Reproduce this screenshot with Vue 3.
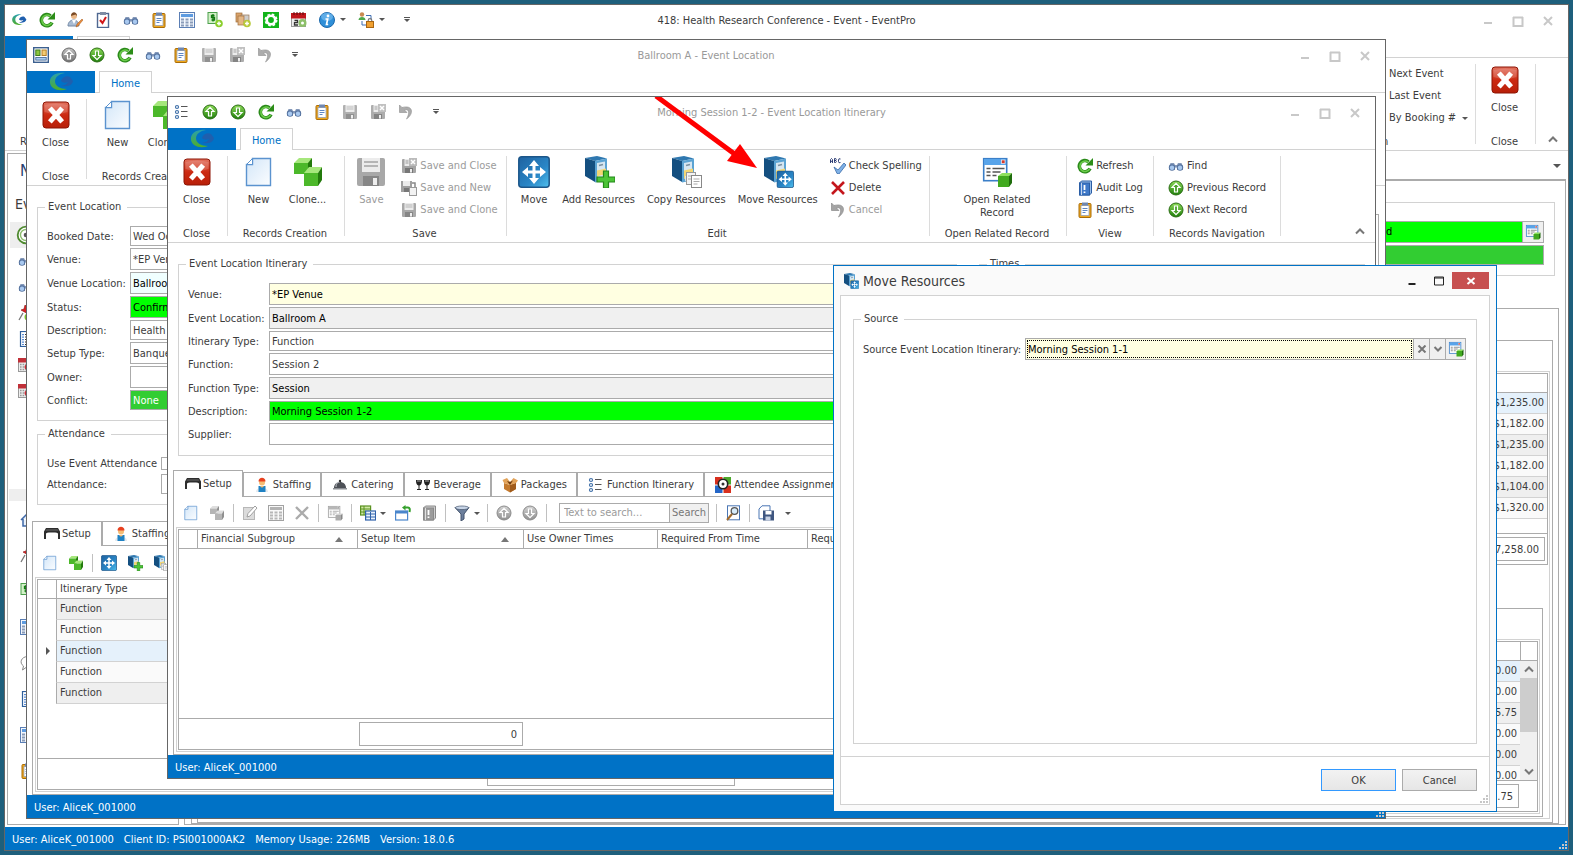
<template>
  <div class="desktop">
    <svg class="sprite" aria-hidden="true">
      <defs>
        <linearGradient id="g-green" x1="0" y1="0" x2="0" y2="1"><stop offset="0" stop-color="#8fdc5a" /><stop offset="1" stop-color="#1c7d08" /></linearGradient>
        <linearGradient id="g-blue" x1="0" y1="0" x2="1" y2="1"><stop offset="0" stop-color="#1f62a0" /><stop offset="0.6" stop-color="#2a86c6" /><stop offset="1" stop-color="#4fc0ee" /></linearGradient>
        <linearGradient id="g-red" x1="0" y1="0" x2="0" y2="1"><stop offset="0" stop-color="#e2725f" /><stop offset="0.5" stop-color="#cc2a12" /><stop offset="1" stop-color="#b81f08" /></linearGradient>
        <linearGradient id="g-page" x1="0" y1="0" x2="1" y2="1"><stop offset="0" stop-color="#d3e6f8" /><stop offset="1" stop-color="#fbfdff" /></linearGradient>
        <linearGradient id="g-logo" x1="0" y1="0" x2="0" y2="1"><stop offset="0" stop-color="#2a9fae" /><stop offset="1" stop-color="#4fae2a" /></linearGradient>
      </defs>
      <symbol id="i-logo" viewBox="0 0 26 20">
        <path d="M17 1C8 0 1 4 2 11c1 6 9 9 17 6-7 0-12-3-12-7.500C7 5 11 2 17 1z" fill="url(#g-logo)" />
        <path d="M13 9c1-4 6-6 9-4l3 4c-1 5-7 6-12 5 4-1 6-2 7-4-3 1-5 1-7-1z" fill="#1f5fae" />
      </symbol>
      <symbol id="i-refresh" viewBox="0 0 16 16">
        <path d="M13 10.500A5.600 5.600 0 1 1 11.500 3.800" fill="none" stroke="#2a8a1a" stroke-width="3.600" />
        <path d="M12.600 10.800A5.200 5.200 0 1 1 11 4" fill="none" stroke="#6bcb4a" stroke-width="1.600" />
        <path d="M8.500 7.500H16V0z" fill="#2c8d18" />
      </symbol>
      <symbol id="i-user" viewBox="0 0 16 16">
        <circle cx="7" cy="4" r="3" fill="#e9b787" /><path d="M4 4c0-5 6-5 6 0L8.500 2.500z" fill="#7a4a24" />
        <path d="M1 14c0-8 11-8 11 0z" fill="#a9bcd3" stroke="#7288a5" /><path d="M5 8l2 4 2-4z" fill="#fff" />
        <path d="M9 15l1-3 5-5 1 1-5 6z" fill="#e88b3a" stroke="#a3571c" stroke-width=".5" />
      </symbol>
      <symbol id="i-clipcheck" viewBox="0 0 16 16">
        <rect x="2.500" y="1.500" width="11" height="14" fill="#fff" stroke="#4f6891" stroke-width="1.400" /><rect x="5" y="0" width="6" height="3" fill="#7d8ba3" />
        <path d="M5 8l2.500 3L11 5" fill="none" stroke="#d01818" stroke-width="2" />
      </symbol>
      <symbol id="i-find" viewBox="0 0 16 16">
        <path d="M2.500 5h3.500l1 2h2l1-2h3.500L15 9v3H9V9.500H7V12H1V9z" fill="#8599ba" />
        <circle cx="4" cy="9.500" r="3.200" fill="#56739f" /><circle cx="12" cy="9.500" r="3.200" fill="#56739f" />
        <circle cx="4" cy="9.700" r="2.200" fill="#a9c9f0" /><circle cx="12" cy="9.700" r="2.200" fill="#a9c9f0" />
      </symbol>
      <symbol id="i-reports" viewBox="0 0 16 16">
        <rect x="2" y="1.500" width="12" height="14" rx="1" fill="#f0a81c" stroke="#a96c08" /><rect x="4" y="3.500" width="8" height="10" fill="#fff" stroke="#8a99b5" stroke-width=".7" />
        <rect x="5" y=".5" width="6" height="3" fill="#6f87b1" /><path d="M5.500 6.500h5M5.500 8.500h5M5.500 10.500h3" stroke="#5d86c4" />
      </symbol>
      <symbol id="i-doclist" viewBox="0 0 16 16">
        <rect x="2.500" y=".5" width="12" height="15" fill="#fff" stroke="#2f5f9c" stroke-width="1.200" /><path d="M7 3.500h6M7 6h6M7 8.500h6M7 11h6M7 13.500h6" stroke="#333" /><path d="M5 3v11" stroke="#2468c8" stroke-width="1.500" stroke-dasharray="1.200 1.300" />
      </symbol>
      <symbol id="i-calc" viewBox="0 0 16 16">
        <rect x=".5" y=".5" width="15" height="15" fill="#f3f7fd" stroke="#5b7fb5" /><rect x="2" y="2" width="12" height="3" fill="#5d9be0" />
        <path d="M2 7.500h3M6.500 7.500h3M11 7.500h3M2 10.500h3M6.500 10.500h3M11 10.500h3M2 13.500h3M6.500 13.500h3M11 13.500h3" stroke="#8a9bb8" stroke-width="1.800" />
      </symbol>
      <symbol id="i-dollar" viewBox="0 0 16 16">
        <rect x="1" y=".5" width="9" height="11" fill="#d3f0c8" stroke="#4ca04c" /><path d="M7.500 3.500H4.500v2h3v2.500h-3M6 2v7.500" fill="none" stroke="#117a11" stroke-width="1.300" />
        <circle cx="12" cy="11.500" r="3.800" fill="#8ccf2e" /><path d="M12 9.500v4M10 11.500h4" stroke="#fff" stroke-width="1.500" />
      </symbol>
      <symbol id="i-packs" viewBox="0 0 16 16">
        <rect x="1" y="1" width="6" height="9" fill="#d9a36c" stroke="#a06e3a" stroke-width=".7" /><rect x="6" y="3" width="8" height="9" fill="#ccc" stroke="#9a7650" stroke-width=".7" />
        <rect x="3" y="4" width="6" height="9" fill="#e3b685" stroke="#a06e3a" stroke-width=".7" /><circle cx="12" cy="11.500" r="3.800" fill="#b8ca3c" /><path d="M12 9.500v4M10 11.500h4" stroke="#fff" stroke-width="1.500" />
      </symbol>
      <symbol id="i-gear" viewBox="0 0 16 16">
        <rect width="16" height="16" fill="#12b41a" /><circle cx="8" cy="8" r="4.200" fill="none" stroke="#fff" stroke-width="2.600" /><circle cx="8" cy="8" r="5.700" fill="none" stroke="#fff" stroke-width="1.600" stroke-dasharray="2.500 2" />
      </symbol>
      <symbol id="i-calendar" viewBox="0 0 16 16">
        <rect x=".5" y="2.500" width="14" height="12" fill="#eee" stroke="#999" /><rect y="1" width="15" height="5.500" fill="#c0161c" />
        <path d="M3 0v3M6 0v3M9 0v3M12 0v3" stroke="#5a0a0c" /><path d="M3.500 8.500h3v2.200h-3V13H7" fill="none" stroke="#333" stroke-width="1.300" /><circle cx="11.500" cy="11" r="4" fill="#8dc06a" /><circle cx="11.500" cy="11" r="1.500" fill="#fff" />
      </symbol>
      <symbol id="i-month" viewBox="0 0 16 16">
        <rect x=".5" y="2.500" width="14" height="12" fill="#eee" stroke="#999" /><rect y="1" width="15" height="4.500" fill="#c03038" />
        <path d="M2 7.500h11M2 10h11M2 12.500h11" stroke="#999" stroke-width="1.400" stroke-dasharray="1.600 1" /><circle cx="9" cy="10" r="2.500" fill="#c8303a" />
      </symbol>
      <symbol id="i-info" viewBox="0 0 16 16">
        <circle cx="8" cy="8" r="7.500" fill="#2f8fd8" stroke="#1b68ab" /><ellipse cx="8" cy="4.800" rx="6" ry="4" fill="#7fc2f3" opacity=".6" />
        <circle cx="9" cy="4" r="1.400" fill="#fff" /><path d="M6.500 7h2.200l-1.200 5.500h1.700" fill="none" stroke="#fff" stroke-width="1.700" />
      </symbol>
      <symbol id="i-userlock" viewBox="0 0 16 16">
        <circle cx="4" cy="2.500" r="2.200" fill="#c98a50" /><path d="M.5 8c0-4 7-4 7 0z" fill="#4ea84c" /><path d="M8 3.500h5v4M4 9v4h4" fill="none" stroke="#3f6fb3" />
        <path d="M10.200 10V8.500a1.800 1.800 0 0 1 3.600 0V10" fill="none" stroke="#777" stroke-width="1.200" /><rect x="8.500" y="9.500" width="7" height="6" fill="#f0a030" stroke="#a96512" />
      </symbol>
      <symbol id="i-layout" viewBox="0 0 16 16">
        <rect x=".7" y=".7" width="14.600" height="14.600" fill="#fff" stroke="#3c6090" stroke-width="1.400" /><rect x="2.800" y="3" width="4.200" height="5.500" fill="#8cc63f" stroke="#3f7d1c" /><rect x="9" y="3" width="4.200" height="5.500" fill="#f3cb72" stroke="#b5802a" /><rect x="2.800" y="10.500" width="10.400" height="2.600" fill="#a7cdf2" stroke="#3c6090" stroke-width=".8" />
      </symbol>
      <symbol id="i-list" viewBox="0 0 16 16">
        <g fill="#fff" stroke="#3f6fa8" stroke-width="1.200"><circle cx="3" cy="3" r="1.500" /><circle cx="3" cy="8" r="1.500" /><circle cx="3" cy="13" r="1.500" /></g><path d="M7 2.500h6.500M7 7.500h6.500M7 12.500h6.500" stroke="#555" />
      </symbol>
      <symbol id="i-up" viewBox="0 0 16 16">
        <circle cx="8" cy="8" r="7" fill="url(#g-green)" stroke="#2b6d14" /><path d="M8 3.300L4 7.500h2.500V12h3V7.500H12z" fill="#4aa02a" stroke="#fff" stroke-width="1.200" />
      </symbol>
      <symbol id="i-down" viewBox="0 0 16 16">
        <circle cx="8" cy="8" r="7" fill="url(#g-green)" stroke="#2b6d14" /><path d="M8 12.700L4 8.500h2.500V4h3v4.500H12z" fill="#4aa02a" stroke="#fff" stroke-width="1.200" />
      </symbol>
      <symbol id="i-save" viewBox="0 0 16 16">
        <rect x="1" y="1" width="14" height="14" rx="1" fill="#a8a8a8" /><rect x="3.500" y="1" width="9" height="7" fill="#ececec" /><path d="M4.500 3h7M4.500 5h7" stroke="#b5b5b5" /><rect x="4" y="10" width="8" height="5" fill="#868686" /><rect x="9" y="11" width="2" height="3.500" fill="#eee" />
      </symbol>
      <symbol id="i-saveclose" viewBox="0 0 16 16">
        <rect x="1" y="1" width="14" height="14" rx="1" fill="#a5a5a5" /><rect x="3.500" y="1" width="9" height="7" fill="#ececec" /><path d="M4.500 3h3M4.500 5h3" stroke="#999" /><rect x="4" y="10" width="8" height="5" fill="#777" /><rect x="9" y="11" width="2" height="3.500" fill="#eee" />
        <rect x="8" y="0" width="8" height="8" fill="#bbb" /><path d="M10 2l4 4M14 2l-4 4" stroke="#fff" stroke-width="1.500" />
      </symbol>
      <symbol id="i-savenew" viewBox="0 0 16 16">
        <rect x="0" y="1" width="11" height="11" fill="#a0a0a0" /><rect x="2" y="1" width="7" height="5" fill="#ececec" /><rect x="3" y="8" width="5" height="4" fill="#777" /><rect x="8.500" y="7.500" width="7" height="8" fill="#f2f2f2" stroke="#999" /><path d="M11 3h3v4" fill="none" stroke="#888" stroke-width="1.500" />
      </symbol>
      <symbol id="i-undo" viewBox="0 0 16 16">
        <path d="M1.500 1v7.500H9L6.500 6C11 4.500 12 9 8.500 15 16 10 15.500.5 4 3.500z" fill="#a4a4a4" stroke="#808080" stroke-width=".6" />
      </symbol>
      <symbol id="i-close" viewBox="0 0 32 32">
        <rect x="3" y="3" width="26" height="26" rx="3" fill="url(#g-red)" stroke="#8d1505" /><path d="M4.500 6q11.500-3 23 0v7q-11 4-23 0z" fill="#fff" opacity=".16" />
        <path d="M11.500 11l9 10M20.500 11l-9 10" stroke="#fff" stroke-width="5" stroke-linecap="square" />
      </symbol>
      <symbol id="i-new" viewBox="0 0 32 32">
        <path d="M9.500 2.500h18v27h-24v-21h6z" fill="url(#g-page)" stroke="#5b93cf" stroke-width="1.400" /><path d="M3.500 8.500l6-6v6z" fill="#fff" stroke="#5b93cf" />
      </symbol>
      <symbol id="i-clone" viewBox="0 0 32 32">
        <path d="M2 7l5-5h13l-3 5z" fill="#a6e77c" /><path d="M2 7h14v11H2z" fill="#4cb82a" /><path d="M16 7l4-5v11l-4 5z" fill="#237a0c" />
        <path d="M12 17l5-6h13l-4 6z" fill="#a6e77c" /><path d="M12 17h14v13H12z" fill="#4cb82a" /><path d="M26 17l4-6v13l-4 6z" fill="#237a0c" />
      </symbol>
      <symbol id="i-move" viewBox="0 0 32 32">
        <rect x=".8" y=".8" width="30.400" height="30.400" rx="3" fill="url(#g-blue)" stroke="#1c5689" stroke-width="1.500" />
        <path d="M16 4l5 6h-3.500v4.500H22V11l6 5-6 5v-3.500h-4.500V22H21l-5 6-5-6h3.500v-4.500H10V21l-6-5 6-5v3.500h4.500V10H11z" fill="#fff" />
      </symbol>
      <symbol id="i-cabinet" viewBox="0 0 32 32">
        <path d="M2 2l12-2 10 2.500L12 5z" fill="#2f78b0" /><path d="M2 2l10 3v21L2 20z" fill="#144f80" /><path d="M12 5l12-2.500V24l-12 2.500z" fill="#5ba3d3" />
        <path d="M14 7l8-1.500v8L14 15.500z" fill="#d6e6f1" /><path d="M14 14.500l9-2v8L14 23z" fill="#f3d673" /><path d="M15 20l8-2v5l-8 2z" fill="#dbe5ee" /><path d="M16 9.500l4-1" stroke="#7b8f9f" stroke-width="1.500" />
      </symbol>
      <symbol id="i-addres" viewBox="0 0 32 32">
        <use href="#i-cabinet" /><path d="M20.500 15h5v6H32v5h-6.500v6h-5v-6H14v-5h6.500z" fill="#4cc437" stroke="#23871a" stroke-width="1.200" />
      </symbol>
      <symbol id="i-copyres" viewBox="0 0 32 32">
        <use href="#i-cabinet" /><rect x="16.500" y="16.500" width="9" height="12" fill="#f4f4f4" stroke="#999" /><rect x="21.500" y="19.500" width="10" height="12" fill="#fff" stroke="#888" /><path d="M23.500 23h6M23.500 25.500h6M23.500 28h4M18 20h3M18 23h3" stroke="#aaa" />
      </symbol>
      <symbol id="i-moveres" viewBox="0 0 32 32">
        <use href="#i-cabinet" /><use href="#i-move" x="14.500" y="14.500" width="17.500" height="17.500" />
      </symbol>
      <symbol id="i-spell" viewBox="0 0 16 16">
        <g fill="none" stroke="#1d2f6a" stroke-width=".9"><path d="M.5 5V1.500L1.500.5l1 1V5M.5 3.300h2M4.500.5v4h1.200q1.300-1 0-2 1-1 0-2zM4.500 2.500H6M10.500 1q-2-1-2 1v1.500q0 2 2 1" /></g>
        <path d="M4 9l4 3 6-7 2 2-7 9-2-.5z" fill="#7fb1e6" stroke="#376aa8" stroke-width=".8" />
      </symbol>
      <symbol id="i-delete" viewBox="0 0 16 16"><path d="M2 2l12 12M14 2L2 14" stroke="#c4161c" stroke-width="2.600" /></symbol>
      <symbol id="i-x" viewBox="0 0 16 16"><path d="M2 2l12 12M14 2L2 14" stroke="#888" stroke-width="2.400" /></symbol>
      <symbol id="i-related" viewBox="0 0 32 32">
        <rect x="2.700" y="2.700" width="23" height="22" fill="#fff" stroke="#3b7fc8" stroke-width="1.600" /><rect x="3" y="3" width="22" height="6" fill="#58a4ea" /><rect x="20.500" y="4" width="3.500" height="3.500" fill="#d53a2a" stroke="#fff" stroke-width=".6" />
        <path d="M5.500 12.500h4M5.500 16h4M5.500 19.500h4M11.500 12.500h12M11.500 16h8M11.500 19.500h4" stroke="#555" stroke-width="1.300" />
        <path d="M17 20l4-3h10l-3 3z" fill="#8de05e" /><path d="M17 20h11v11H17z" fill="#41a91f" /><path d="M28 20l3-3v10l-3 4z" fill="#1f6d0c" />
      </symbol>
      <symbol id="i-audit" viewBox="0 0 16 16">
        <path d="M2.500 3l2-2h10v12l-2 2h-10z" fill="#9cc0ea" stroke="#2b5ea5" /><rect x="2.500" y="3" width="10" height="12" fill="#3f79c8" stroke="#2b5ea5" /><path d="M7.500 5v5M7.500 11.500v1.500" stroke="#fff" stroke-width="1.800" /><path d="M4.500 3v12" stroke="#fff" stroke-width=".7" />
      </symbol>
      <symbol id="i-setup" viewBox="0 0 16 16">
        <path d="M2 2h12l2 3.500V13h-2V7.500q-1-1-3-1H5q-2 0-3 1V13H0V5.500z" fill="#2e2e2e" /><path d="M2.500 3h11l1 2h-13z" fill="#4c4c4c" />
      </symbol>
      <symbol id="i-staffing" viewBox="0 0 16 16">
        <path d="M2 15c0-6 12-6 12 0z" fill="#e5e9ee" /><path d="M4.500 9h7v6h-7z" fill="#1f82c4" /><circle cx="8" cy="5.500" r="3" fill="#f6bd75" /><path d="M4.500 4.500c0-5 7-5 7 0z" fill="#e8401f" /><path d="M6 9q2 3 4 0z" fill="#f6bd75" />
      </symbol>
      <symbol id="i-catering" viewBox="0 0 16 16">
        <path d="M2 11c0-8 12-8 12 0z" fill="#4d5157" /><path d="M4 10c0-4 2-5 4-5" fill="none" stroke="#c9ccd1" /><circle cx="8" cy="4" r="1.200" fill="#333" /><rect x="1" y="11" width="14" height="1.500" fill="#8c8f94" />
      </symbol>
      <symbol id="i-beverage" viewBox="0 0 16 16">
        <path d="M1 3h6c0 4-1 5-2.500 5.500V12H6v1H2v-1h1.500V8.500C2 8 1 7 1 3zM9 3h6c0 4-1 5-2.500 5.500V12H14v1h-4v-1h1.500V8.500C10 8 9 7 9 3z" fill="#222" /><path d="M2 4h4M10 4h4" stroke="#aaa" />
      </symbol>
      <symbol id="i-packages" viewBox="0 0 16 16">
        <path d="M2 6l6 2 6-2v6l-6 3.500L2 12z" fill="#c47a2e" /><path d="M8 8v7.500l6-3.500V6z" fill="#a05b1c" /><path d="M2 6L.5 3 5 1l3 4 3.500-4L16 3.500 14 6 8 8z" fill="#e2a258" /><path d="M5 4l3 1 3-1.500L8 8z" fill="#6d3b10" />
      </symbol>
      <symbol id="i-attendee" viewBox="0 0 16 16">
        <rect width="7.500" height="7.500" fill="#d8301e" /><rect x="8.500" width="7.500" height="7.500" fill="#4ca82a" /><rect y="8.500" width="7.500" height="7.500" fill="#2466c8" /><rect x="8.500" y="8.500" width="7.500" height="7.500" fill="#d8301e" />
        <circle cx="8" cy="7" r="4.700" fill="#fff" stroke="#222" stroke-width="1.600" /><circle cx="8" cy="7" r="1.500" fill="#333" />
      </symbol>
      <symbol id="i-edit" viewBox="0 0 16 16">
        <rect x="1.500" y="2.500" width="11" height="12" fill="#ccc" stroke="#999" /><path d="M5 12l1-3.500L13 1l2 2-7 8z" fill="#fff" stroke="#777" />
      </symbol>
      <symbol id="i-views" viewBox="0 0 16 16">
        <rect x=".6" y="1" width="10" height="9" fill="#cfe8a5" stroke="#5a9220" stroke-width="1.200" /><path d="M1 4h9M1 7h9M4 1v9" stroke="#5a9220" /><rect x="5.600" y="6" width="10" height="9" fill="#eaf3fd" stroke="#2f62ab" stroke-width="1.200" /><path d="M6 9h9M6 12h9M10.500 7v8" stroke="#2f62ab" />
      </symbol>
      <symbol id="i-restore" viewBox="0 0 16 16">
        <rect x=".6" y="6" width="12" height="9" fill="#fff" stroke="#4a86cc" stroke-width="1.200" /><rect x="1" y="6" width="11" height="2.500" fill="#4a86cc" /><path d="M9 2.500h4q2.500 0 1.500 4.500" fill="none" stroke="#35a02c" stroke-width="2" /><path d="M7 2.500L10.500 0v5.500z" fill="#35a02c" />
      </symbol>
      <symbol id="i-filter" viewBox="0 0 16 16">
        <path d="M1 2.500h14L10 9v5l-3 2V9z" fill="#6c7f9c" stroke="#43536c" /><ellipse cx="8" cy="2.800" rx="6.800" ry="1.800" fill="#c7d4e6" stroke="#43536c" stroke-width=".7" />
      </symbol>
      <symbol id="i-preview" viewBox="0 0 16 16">
        <rect x="2.500" y=".8" width="12" height="14" fill="#fff" stroke="#4a76b4" /><circle cx="9.500" cy="6" r="3.300" fill="#d7ecfb" stroke="#555" stroke-width="1.300" /><path d="M7 9L2 15" stroke="#a26a2c" stroke-width="2" />
      </symbol>
      <symbol id="i-export" viewBox="0 0 16 16">
        <path d="M4 .8h8v13H1V4z" fill="#fff" stroke="#4a76b4" /><rect x="5" y="5.500" width="11" height="10" fill="#3f5680" /><rect x="7.500" y="6" width="6" height="3.500" fill="#fff" /><rect x="7.500" y="11.500" width="5" height="4" fill="#c8d2e4" />
      </symbol>
      <symbol id="i-pin" viewBox="0 0 16 16">
        <path d="M7 0l5 4-2 1v4L3 5l3-1z" fill="#d82020" stroke="#8a0f0f" stroke-width=".6" /><path d="M5 8l-4 7" stroke="#777" stroke-width="1.300" /><circle cx="10" cy="12" r="3.500" fill="#7cc52c" />
      </symbol>
      <symbol id="i-house" viewBox="0 0 16 16"><path d="M1 9l7-7 7 7M3 8v7h10V8" fill="#e8f0fa" stroke="#3e68a8" stroke-width="1.500" /></symbol>
      <symbol id="i-bubble" viewBox="0 0 16 16"><path d="M8 1.500c9 0 9 11 0 11H6L2.500 15l1-4C-1 8 1 1.500 8 1.500z" fill="#fff" stroke="#888" /></symbol>
      <symbol id="i-settings" viewBox="0 0 26 26">
        <circle cx="13" cy="13" r="9" fill="#fff" stroke="#4f8a30" stroke-width="2" /><circle cx="13" cy="13" r="6" fill="none" stroke="#8bbd6c" stroke-width="1.500" /><circle cx="13" cy="13" r="2.500" fill="#555" />
      </symbol>
    </svg>

    <section v-for="w in windows" :key="w.key" class="window" :class="'win-' + w.key">
      <header class="titlebar">
        <div class="quick">
          <template v-for="(q, i) in w.quick" :key="i">
            <span v-if="q === '|'" class="caret quick-caret"></span>
            <button v-else type="button" class="quick-btn" :class="{ gray: q.startsWith('-') }" :aria-label="q.replace('-', '')">
              <svg class="ic16"><use :href="'#i-' + q.replace('-', '')" /></svg>
            </button>
          </template>
          <span class="more"></span>
        </div>
        <h1 class="title">{{ w.title }}</h1>
        <div class="controls">
          <button type="button" aria-label="Minimize"><svg viewBox="0 0 12 12"><path d="M2 8h8" /></svg></button>
          <button type="button" aria-label="Maximize"><svg viewBox="0 0 12 12"><path d="M1.500 2v9h9V2M1 2.500h10" /></svg></button>
          <button type="button" aria-label="Close"><svg viewBox="0 0 12 12"><path d="M2 2l8 8M10 2l-8 8" /></svg></button>
        </div>
      </header>

      <nav class="ribbon-tabs">
        <button type="button" class="app-tab" aria-label="Application"><svg v-if="w.key !== 'event'"><use href="#i-logo" /></svg></button>
        <a href="#" class="home-tab" @click.prevent>{{ w.key === 'event' ? '' : 'Home' }}</a>
      </nav>

      <div class="ribbon">
        <template v-for="g in w.groups" :key="g.key">
          <div class="group" :class="'group-' + g.key">
            <div class="group-body">
              <button v-for="b in g.big" :key="b.label" type="button" class="big" :class="{ disabled: b.off }">
                <svg class="ic32"><use :href="'#i-' + b.icon" /></svg>
                <span>{{ b.label }}</span>
              </button>
              <div v-if="g.small" class="small-list">
                <button v-for="s in g.small" :key="s.label" type="button" class="small" :class="{ disabled: s.off }">
                  <svg v-if="s.icon" class="ic16"><use :href="'#i-' + s.icon" /></svg>
                  <span>{{ s.label }}</span>
                  <i v-if="s.drop" class="caret"></i>
                </button>
              </div>
            </div>
            <div class="group-label">{{ g.label }}</div>
          </div>
          <div class="group-sep"></div>
        </template>
        <button v-if="w.key !== 'location'" type="button" class="collapse" aria-label="Collapse the ribbon">
          <svg viewBox="0 0 10 8"><path d="M1 6.500l4-4 4 4" /></svg>
        </button>
      </div>

      <!-- Event -->
      <div v-if="w.key === 'event'" class="event-content">
        <aside class="side">
          <h2>N</h2>
          <h3>Ev</h3>
          <ul class="side-top">
            <li v-for="(n, i) in sideTop" :key="i" :class="{ current: i === 0 }"><svg class="ic16"><use :href="'#i-' + n" /></svg></li>
          </ul>
          <div class="side-bar"></div>
          <ul class="side-bottom">
            <li v-for="(n, i) in sideBottom" :key="i"><svg class="ic16"><use :href="'#i-' + n" /></svg></li>
          </ul>
        </aside>
        <main class="event-main">
          <div class="view-strip"><span class="caret wide"></span></div>
          <div class="event-pane">
            <div class="status-box">
              <div class="status-row">
                <input v-model="eventStatus" class="lime" type="text" aria-label="Status" />
                <button type="button" class="lookup" aria-label="Open"><svg class="ic16"><use href="#i-related" /></svg></button>
              </div>
              <input v-model="eventConflict" class="green" type="text" aria-label="Conflict" />
            </div>
            <div class="sheet outer">
              <div class="sheet middle">
                <div class="sheet inner">
                  <div class="grid totals">
                    <table>
                      <thead><tr><th></th></tr></thead>
                      <tbody>
                        <tr v-for="(v, i) in totals" :key="i" :class="{ selected: i === 0 }"><td>{{ v }}</td></tr>
                      </tbody>
                    </table>
                    <div class="grid-foot"><output class="sum">$7,258.00</output></div>
                  </div>
                  <div class="payments">
                    <div class="grid-frame">
                      <div class="grid">
                        <table>
                          <thead><tr><th></th><th class="scroll-col"></th></tr></thead>
                        </table>
                        <div class="scroll-area">
                          <table>
                            <tbody>
                              <tr v-for="(v, i) in amounts" :key="i" :class="{ selected: i === 0 }"><td>{{ v }}</td></tr>
                            </tbody>
                          </table>
                          <div class="scrollbar">
                            <svg viewBox="0 0 10 8"><path d="M1 6.500l4-4 4 4" /></svg>
                            <span class="thumb"></span>
                            <svg viewBox="0 0 10 8"><path d="M1 1.500l4 4 4-4" /></svg>
                          </div>
                        </div>
                        <div class="grid-foot"><output class="sum">5.75</output></div>
                      </div>
                    </div>
                  </div>
                </div>
              </div>
            </div>
          </div>
        </main>
      </div>

      <!-- Event location and itinerary -->
      <div v-else class="record">
        <div class="record-forms">
          <div class="form-column">
            <fieldset>
              <legend>{{ w.legend }}</legend>
              <div v-for="f in w.fields" :key="f.label" class="field" :class="{ low: f.low }">
                <label :for="w.key + f.label">{{ f.label }}:</label>
                <input :id="w.key + f.label" v-model="f.value" type="text" :class="f.tone" />
              </div>
            </fieldset>
            <fieldset v-if="w.key === 'location'" class="attendance">
              <legend>Attendance</legend>
              <div class="field low">
                <label for="useAtt">Use Event Attendance</label>
                <input id="useAtt" type="checkbox" />
              </div>
              <div class="field low">
                <label for="att">Attendance:</label>
                <input id="att" type="text" />
              </div>
            </fieldset>
          </div>
          <fieldset v-if="w.key === 'itinerary'" class="times"><legend>Times</legend></fieldset>
          <div v-else class="side-sheet"></div>
        </div>

        <div class="tabs">
          <button v-for="(t, i) in w.tabs" :key="t.label" type="button" class="tab" :class="{ active: i === 0 }">
            <svg class="ic16"><use :href="'#i-' + t.icon" /></svg>{{ t.label }}
          </button>
        </div>
        <div class="page">
          <div class="toolbar">
            <template v-for="(t, i) in w.tools" :key="i">
              <span v-if="t === '|'" class="tool-sep"></span>
              <span v-else-if="t === 'v'" class="tool-caret"><i class="caret"></i></span>
              <form v-else-if="t === 'search'" class="search" @submit.prevent>
                <input v-model="query" type="text" placeholder="Text to search..." aria-label="Text to search" />
                <button type="submit">Search</button>
              </form>
              <button v-else type="button" class="tool" :class="{ gray: t.startsWith('-') }" :aria-label="t.replace('-', '')">
                <svg class="ic16"><use :href="'#i-' + t.replace('-', '')" /></svg>
              </button>
            </template>
          </div>
          <div class="grid-frame">
            <div class="grid">
              <table class="records">
                <thead>
                  <tr>
                    <th class="mark"></th>
                    <th v-for="c in w.columns" :key="c.label" :class="c.size">
                      <span class="head">{{ c.label }}<i v-if="c.sorted" class="sort"></i></span>
                    </th>
                  </tr>
                </thead>
                <tbody>
                  <tr v-for="(r, i) in w.rows" :key="i" :class="{ selected: i === 2 }">
                    <td class="mark"><i v-if="i === 2" class="pointer"></i></td>
                    <td>{{ r }}</td>
                  </tr>
                </tbody>
              </table>
              <div class="grid-foot"><output class="sum">{{ w.sum }}</output></div>
            </div>
          </div>
        </div>
      </div>

      <footer class="statusbar">
        <span v-for="s in w.status" :key="s">{{ s }}</span>
        <svg v-if="w.key !== 'itinerary'" class="grip" viewBox="0 0 9 9"><path :d="gripPath" /></svg>
      </footer>
    </section>

    <section class="dialog" role="dialog" aria-labelledby="dlg-title">
      <header class="dialog-title">
        <svg class="ic16"><use href="#i-moveres" /></svg>
        <h2 id="dlg-title">Move Resources</h2>
        <button type="button" aria-label="Minimize"><svg viewBox="0 0 12 12"><path d="M2.500 9h7" /></svg></button>
        <button type="button" aria-label="Maximize"><svg viewBox="0 0 12 12"><path d="M1.500 2v8h9V2zM1 3h10" class="thin" /></svg></button>
        <button type="button" class="dialog-close" aria-label="Close"><svg viewBox="0 0 12 12"><path d="M2.500 3l7 6M9.500 3l-7 6" /></svg></button>
      </header>
      <div class="dialog-panel">
        <fieldset>
          <legend>Source</legend>
          <div class="source-row">
            <label for="source">Source Event Location Itinerary:</label>
            <div class="picker">
              <input id="source" v-model="source" type="text" />
              <button type="button" aria-label="Clear" @click="source = ''"><svg viewBox="0 0 10 8"><path d="M1.500 .5l7 7M8.500 .5l-7 7" /></svg></button>
              <button type="button" aria-label="Show list"><svg viewBox="0 0 10 8"><path d="M1.500 2l3.500 3.500L8.500 2" /></svg></button>
              <button type="button" class="open" aria-label="Open record"><svg class="ic16"><use href="#i-related" /></svg></button>
            </div>
          </div>
        </fieldset>
        <div class="dialog-actions">
          <button type="button" class="primary">OK</button>
          <button type="button">Cancel</button>
          <svg class="grip" viewBox="0 0 9 9"><path :d="gripPath" /></svg>
        </div>
      </div>
    </section>

    <svg class="pointer-arrow" viewBox="0 0 120 80">
      <path d="M6 -1L90 61" stroke="#f00" stroke-width="5" />
      <path d="M107 71L77 64L90 47z" fill="#f00" />
    </svg>
  </div>
</template>

<script setup>
import { ref, reactive } from 'vue';

const query = ref('');
const source = ref('Morning Session 1-1');
const eventStatus = ref('Confirmed');
const eventConflict = ref('');
const gripPath = 'M6 0h2v2H6zM3 3h2v2H3zM6 3h2v2H6zM0 6h2v2H0zM3 6h2v2H3zM6 6h2v2H6z';

const totals = ['$1,235.00', '$1,182.00', '$1,235.00', '$1,182.00', '$1,104.00', '$1,320.00'];
const amounts = ['0.00', '0.00', '5.75', '0.00', '0.00', '0.00'];
const sideTop = ['settings', 'find', 'find', 'pin', 'doclist', 'month', 'month'];
const sideBottom = ['house', 'pin', 'dollar', 'calc', 'bubble', 'doclist', '-calc', 'reports'].map(n => n.replace('-', ''));

const closeGroup = { key: 'close', label: 'Close', big: [{ icon: 'close', label: 'Close' }] };
const createGroup = {
  key: 'create',
  label: 'Records Creation',
  big: [{ icon: 'new', label: 'New' }, { icon: 'clone', label: 'Clone...' }]
};

const windows = reactive([
  {
    key: 'event',
    title: '418: Health Research Conference - Event - EventPro',
    quick: ['logo', 'refresh', 'user', 'clipcheck', 'find', 'reports', 'calc', 'dollar', 'packs', 'gear', 'calendar', 'info', '|', 'userlock', '|'],
    groups: [
      { key: 'records', label: 'R' },
      { key: 'booking', label: 'Records Navigation', small: [{ label: 'Next Event' }, { label: 'Last Event' }, { label: 'By Booking #', drop: true }] },
      closeGroup
    ],
    status: ['User: AliceK_001000', 'Client ID: PSI001000AK2', 'Memory Usage: 226MB', 'Version: 18.0.6']
  },
  {
    key: 'location',
    title: 'Ballroom A - Event Location',
    quick: ['layout', '-up', 'down', 'refresh', 'find', 'reports', '-save', '-saveclose', '-undo'],
    groups: [closeGroup, createGroup],
    legend: 'Event Location',
    fields: [
      { label: 'Booked Date', value: 'Wed Oct 10, 2018', low: true },
      { label: 'Venue', value: '*EP Venue' },
      { label: 'Venue Location', value: 'Ballroom A', tone: 'aqua' },
      { label: 'Status', value: 'Confirmed', tone: 'lime' },
      { label: 'Description', value: 'Health Research', low: true },
      { label: 'Setup Type', value: 'Banquet' },
      { label: 'Owner', value: '' },
      { label: 'Conflict', value: 'None', tone: 'green', low: true }
    ],
    tabs: [{ icon: 'setup', label: 'Setup' }, { icon: 'staffing', label: 'Staffing' }],
    tools: ['new', 'clone', '|', 'move', 'addres', 'copyres'],
    columns: [{ label: 'Itinerary Type' }],
    rows: ['Function', 'Function', 'Function', 'Function', 'Function'],
    sum: '',
    status: ['User: AliceK_001000']
  },
  {
    key: 'itinerary',
    title: 'Morning Session 1-2 - Event Location Itinerary',
    quick: ['list', 'up', 'down', 'refresh', 'find', 'reports', '-save', '-saveclose', '-undo'],
    groups: [
      closeGroup,
      createGroup,
      {
        key: 'save',
        label: 'Save',
        big: [{ icon: 'save', label: 'Save', off: true }],
        small: [
          { icon: 'saveclose', label: 'Save and Close', off: true },
          { icon: 'savenew', label: 'Save and New', off: true },
          { icon: 'save', label: 'Save and Clone', off: true }
        ]
      },
      {
        key: 'edit',
        label: 'Edit',
        big: [
          { icon: 'move', label: 'Move' },
          { icon: 'addres', label: 'Add Resources' },
          { icon: 'copyres', label: 'Copy Resources' },
          { icon: 'moveres', label: 'Move Resources' }
        ],
        small: [{ icon: 'spell', label: 'Check Spelling' }, { icon: 'delete', label: 'Delete' }, { icon: 'undo', label: 'Cancel', off: true }]
      },
      { key: 'related', label: 'Open Related Record', big: [{ icon: 'related', label: 'Open Related Record' }] },
      {
        key: 'view',
        label: 'View',
        small: [{ icon: 'refresh', label: 'Refresh' }, { icon: 'audit', label: 'Audit Log' }, { icon: 'reports', label: 'Reports' }]
      },
      {
        key: 'nav',
        label: 'Records Navigation',
        small: [{ icon: 'find', label: 'Find' }, { icon: 'up', label: 'Previous Record' }, { icon: 'down', label: 'Next Record' }]
      }
    ],
    legend: 'Event Location Itinerary',
    fields: [
      { label: 'Venue', value: '*EP Venue', tone: 'cream' },
      { label: 'Event Location', value: 'Ballroom A', tone: 'locked' },
      { label: 'Itinerary Type', value: 'Function', low: true },
      { label: 'Function', value: 'Session 2' },
      { label: 'Function Type', value: 'Session', tone: 'locked' },
      { label: 'Description', value: 'Morning Session 1-2', tone: 'lime', low: true },
      { label: 'Supplier', value: '' }
    ],
    tabs: [
      { icon: 'setup', label: 'Setup' },
      { icon: 'staffing', label: 'Staffing' },
      { icon: 'catering', label: 'Catering' },
      { icon: 'beverage', label: 'Beverage' },
      { icon: 'packages', label: 'Packages' },
      { icon: 'list', label: 'Function Itinerary' },
      { icon: 'attendee', label: 'Attendee Assignments' }
    ],
    tools: ['new', '-clone', '|', '-edit', '-calc', '-x', '|', '-related', '|', 'views', 'v', 'restore', '-audit', '|', 'filter', 'v', '|', '-up', '-down', '|', 'search', '|', 'preview', '|', 'export', 'v'],
    columns: [
      { label: 'Financial Subgroup', size: 'c-sub', sorted: true },
      { label: 'Setup Item', size: 'c-item', sorted: true },
      { label: 'Use Owner Times', size: 'c-owner' },
      { label: 'Required From Time', size: 'c-from' },
      { label: 'Required To Time' }
    ],
    rows: [],
    sum: '0',
    status: ['User: AliceK_001000']
  }
]);
</script>

<style>
body {
  margin: 0;
  overflow: hidden;
}
</style>

<style scoped>
.desktop {
  position: relative;
  min-height: 100vh;
  background: #1e5f7c;
  overflow: hidden;
  font: 11px/14px "DejaVu Sans Condensed", "Noto Sans", sans-serif;
  color: #3c3c3c;
}

.desktop *,
.desktop *::before {
  box-sizing: border-box;
}

.sprite {
  position: absolute;
  width: 0;
  height: 0;
}

button,
input {
  font: inherit;
  color: inherit;
  margin: 0;
  padding: 0;
  border: none;
  background: transparent;
  border-radius: 0;
}

button {
  white-space: nowrap;
}

ul {
  list-style: none;
  margin: 0;
  padding: 0;
}

.ic16 {
  width: 16px;
  height: 16px;
  flex: none;
  display: block;
}

.ic32 {
  width: 32px;
  height: 32px;
  flex: none;
}

.gray {
  filter: grayscale(1);
  opacity: 0.7;
}

.titlebar .gray {
  opacity: 0.9;
}

.caret {
  display: inline-block;
  width: 0;
  height: 0;
  border: 3px solid transparent;
  border-top-color: #555;
  border-bottom: none;
}

/* windows */
.window {
  position: absolute;
  isolation: isolate;
  display: flex;
  flex-direction: column;
  background: #fff;
  border: 1px solid #666;
}

.win-event {
  inset: 4px 4px 4px 4px;
}

.win-location {
  inset: 39px 187px 36px 26px;
}

.win-itinerary {
  inset: 96px 197px 76px 167px;
}

.titlebar {
  flex: none;
  height: 31px;
  display: grid;
  grid-template-columns: 1fr auto 1fr;
  align-items: center;
}

.quick {
  display: flex;
  align-items: center;
  gap: 12px;
  padding: 0 0 2px 6px;
}

.quick-caret {
  margin: 0 0 0 -7px;
}

.more {
  width: 6px;
  height: 5px;
  margin-left: 7px;
  border-top: 1px solid #555;
  display: flex;
  justify-content: center;
}

.more::before {
  content: "";
  margin-top: 1px;
  height: 3px;
  border: 3px solid transparent;
  border-top-color: #555;
  border-bottom: none;
}

.title {
  margin: 0;
  font-size: 11px;
  font-weight: normal;
  color: #999;
}

.win-event .title {
  color: #3c3c3c;
}

.controls {
  display: flex;
  justify-content: flex-end;
  padding-right: 5px;
}

.controls button {
  width: 30px;
  height: 16px;
  display: flex;
  align-items: center;
  justify-content: center;
}

.controls svg {
  width: 12px;
  height: 12px;
  fill: none;
  stroke: #c8c8c8;
  stroke-width: 2;
}

.ribbon-tabs {
  flex: none;
  height: 22px;
  display: flex;
  border-bottom: 1px solid #d2d2d2;
}

.app-tab {
  width: 68px;
  height: 22px;
  background: #0072c6;
}

.app-tab svg {
  width: 26px;
  height: 20px;
  display: block;
  margin: 0 auto;
}

.home-tab {
  height: 22px;
  width: 53px;
  margin-left: 4px;
  border: 1px solid #d2d2d2;
  border-bottom: none;
  background: #fff;
  color: #0072c6;
  text-align: center;
  line-height: 23px;
  text-decoration: none;
}

.ribbon {
  flex: none;
  height: 93px;
  display: flex;
  border-bottom: 1px solid #d2d2d2;
}

.group {
  flex: none;
  display: flex;
  flex-direction: column;
  padding-top: 5px;
}

.group-sep {
  flex: none;
  width: 1px;
  margin: 6px 0;
  background: #dcdcdc;
}

.group-body {
  height: 72px;
  display: flex;
  justify-content: center;
}

.group-label {
  text-align: center;
  white-space: nowrap;
}

.group-close {
  width: 59px;
  padding-right: 2px;
}

.group-create {
  width: 116px;
  padding-right: 2px;
}

.group-save {
  width: 161px;
  padding-right: 2px;
}

.group-create .group-body,
.group-save .group-body {
  padding-right: 4px;
}

.group-edit {
  width: 422px;
  padding-right: 2px;
}

.group-related {
  width: 136px;
  padding-right: 2px;
}

.group-view {
  width: 86px;
}

.group-nav {
  width: 126px;
}

.group-records {
  width: 116px;
}

.group-records .group-label {
  text-align: left;
  padding-left: 15px;
}

.group-booking {
  width: 263px;
  margin-left: auto;
}

.group-booking .group-body {
  justify-content: flex-start;
  padding-left: 177px;
}

.group-booking .small {
  gap: 6px;
}

.group-booking .group-label {
  padding-right: 6px;
}

.win-event .collapse {
  margin-left: 12px;
}

.big {
  display: flex;
  flex-direction: column;
  align-items: center;
  gap: 5px;
  padding: 1px 6px 0;
  line-height: 13px;
}

.group-create .big {
  width: 49px;
  padding: 1px 0 0;
}

.group-save .big {
  width: 48px;
}

.group-related .big {
  width: 90px;
  white-space: normal;
}

.small-list {
  display: flex;
  flex-direction: column;
}

.group-save .small-list,
.group-edit .small-list {
  margin-left: 6px;
}

.small {
  height: 22px;
  display: flex;
  align-items: center;
  gap: 3px;
}

.disabled {
  color: #9b9b9b;
}

.collapse {
  margin-left: auto;
  padding-right: 10px;
  align-self: flex-end;
  height: 22px;
}

.collapse svg {
  width: 10px;
  height: 8px;
  display: block;
}

.collapse path,
.scrollbar path {
  fill: none;
  stroke: #777;
  stroke-width: 2;
}

.statusbar {
  flex: none;
  height: 23px;
  background: #0072c6;
  color: #fff;
  display: flex;
  align-items: center;
  gap: 10px;
  padding: 2px 0 0 7px;
}

.grip {
  width: 9px;
  height: 9px;
  margin-left: auto;
  align-self: flex-end;
  fill: #c6c6c6;
}

/* event window */
.event-content {
  flex: 1;
  min-height: 0;
  display: flex;
  padding: 2px 2px 2px;
}

.side {
  flex: none;
  width: 172px;
  border: 1px solid #ababab;
  overflow: hidden;
}

.side h2 {
  margin: 6px 0 0 12px;
  font-size: 16px;
  line-height: 22px;
  font-weight: normal;
  color: #27406e;
}

.side h3 {
  margin: 12px 0 8px 7px;
  font-size: 14px;
  line-height: 20px;
  font-weight: normal;
}

.side li {
  height: 26px;
  padding-left: 8px;
  display: flex;
  align-items: center;
}

.side-top {
  margin-left: 2px;
}

.side .current {
  background: #eee;
  padding-left: 4px;
}

.side .current svg {
  width: 24px;
  height: 24px;
}

.side-bar {
  margin: 85px 0 0 1px;
  height: 12px;
  background: #eee;
}

.side-bottom li {
  height: 36px;
  padding-left: 12px;
}

.event-main {
  flex: 1;
  min-width: 0;
  margin-left: 5px;
  display: flex;
  flex-direction: column;
}

.view-strip {
  flex: none;
  height: 26px;
  display: flex;
  justify-content: flex-end;
  align-items: center;
  padding-right: 5px;
}

.caret.wide {
  border-width: 4px 4px 0;
}

.event-pane {
  flex: 1;
  min-height: 0;
  border: 1px solid #ababab;
  border-top-width: 2px;
  padding: 21px 6px 0;
  display: flex;
  flex-direction: column;
}

.status-box {
  flex: none;
  height: 74px;
  margin-right: 4px;
  border: 1px solid #d2d2d2;
  padding: 18px 10px 0 900px;
  display: flex;
  flex-direction: column;
  gap: 2px;
}

.status-row {
  display: flex;
  height: 22px;
}

.status-box input {
  border: 1px solid #ababab;
  flex: 1;
  min-width: 0;
}

.status-box > input {
  flex: none;
  height: 20px;
}

.status-row input {
  padding-left: 248px;
}

.lookup {
  width: 21px;
  border: 1px solid #ababab;
  border-left: none;
  background: #f0f0f0;
  padding-left: 2px;
}

.sheet {
  flex: 1;
  min-height: 0;
  display: flex;
  flex-direction: column;
  border: 1px solid #ababab;
}

.sheet.outer {
  margin-top: 32px;
  padding: 31px 5px 0;
}

.sheet.middle {
  padding: 30px 2px 3px;
}

.sheet.inner {
  border-color: #d2d2d2;
  padding: 1px 1px 1px;
}

.totals {
  flex: none;
  height: 192px;
}

.totals td {
  padding-right: 3px;
}

.payments {
  flex: 1;
  min-height: 0;
  margin: 43px 5px 0 0;
  border: 1px solid #ababab;
  padding: 30px 2px 2px;
  display: flex;
}

.scroll-area {
  flex: 1;
  min-height: 0;
  display: flex;
  overflow: hidden;
}

.scroll-area table {
  align-self: flex-start;
}

.scroll-col {
  width: 17px;
}

.scrollbar {
  flex: none;
  width: 17px;
  background: #f0f0f0;
  display: flex;
  flex-direction: column;
  align-items: center;
  padding: 4px 0;
}

.scrollbar svg {
  flex: none;
  width: 10px;
  height: 8px;
}

.thumb {
  width: 17px;
  height: 54px;
  margin: 5px 0 auto;
  background: #cdcdcd;
}

.event-main .sum {
  margin-left: auto;
  margin-right: 2px;
  width: 240px;
}

.payments .sum {
  margin-right: 18px;
}

.event-main td {
  text-align: right;
}

/* record windows */
.record {
  flex: 1;
  min-height: 0;
  display: flex;
  flex-direction: column;
  padding: 14px 5px 0;
}

.record-forms {
  display: flex;
  padding: 0 5px;
}

.form-column {
  flex: 779 1 0;
}

fieldset {
  min-width: 0;
  margin: 0;
  padding: 12px 9px 10px;
  border: 1px solid #d2d2d2;
}

legend {
  margin-left: -2px;
  padding: 0 6px 0 3px;
}

.times {
  flex: 366 1 0;
  margin-left: 22px;
}

.side-sheet {
  flex: 380 1 0;
  margin: 14px -4px 0 20px;
  border: 1px solid #ababab;
}

.attendance {
  margin-top: 6px;
  padding-top: 12px;
}

.field {
  display: flex;
  align-items: center;
  height: 22px;
}

.field + .field {
  margin-top: 2px;
}

.attendance .field + .field {
  margin-top: 1px;
}

.field.low {
  height: 20px;
}

.field label {
  flex: none;
  width: 81px;
  padding-top: 1px;
  white-space: nowrap;
}

.win-location .field label {
  width: 83px;
}

.attendance .field label {
  width: 114px;
}

.field input[type="text"] {
  flex: 1;
  min-width: 0;
  align-self: stretch;
  border: 1px solid #ababab;
  padding: 1px 2px 0;
}

.field input[type="checkbox"] {
  appearance: none;
  width: 13px;
  height: 13px;
  border: 1px solid #ababab;
}

.desktop .cream {
  background: #ffffe1;
  color: #000;
}

.desktop .locked {
  background: #f0f0f0;
  color: #000;
}

.desktop .aqua {
  background: #f0ffff;
  color: #000;
}

.desktop .lime {
  background: #0f0;
  color: #000;
}

.desktop .green {
  background: #32cd32;
  color: #fff;
}

.tabs {
  flex: none;
  height: 27px;
  margin-top: 14px;
  display: flex;
  align-items: flex-end;
  position: relative;
  z-index: 1;
}

.win-location .tabs {
  height: 25px;
  margin-top: 16px;
}

.tab {
  height: 25px;
  padding: 0 9px 0 10px;
  display: flex;
  align-items: center;
  gap: 3px;
  border: 1px solid #ababab;
  background: #fff;
}

.tab.active {
  height: 27px;
  padding: 0 10px 0 11px;
  gap: 2px;
  border-bottom: none;
}

.win-location .tab.active {
  height: 25px;
}

.page {
  flex: 1;
  min-height: 0;
  margin-top: -1px;
  display: flex;
  flex-direction: column;
  border: 1px solid #ababab;
  padding: 0 3px 2px 2px;
}

.toolbar {
  flex: none;
  height: 30px;
  display: flex;
  align-items: center;
  padding: 2px 0 0 2px;
}

.win-location .toolbar {
  height: 31px;
}

.tool {
  width: 26px;
  display: flex;
  justify-content: center;
}

.tool-sep {
  width: 1px;
  height: 18px;
  margin: 0 3px;
  background: #c0c0c0;
}

.tool-caret {
  width: 9px;
  margin-left: -3px;
  margin-right: 3px;
  display: flex;
  justify-content: center;
}

.tool-caret:last-child {
  margin-left: 4px;
}

.search {
  display: flex;
  width: 150px;
  height: 20px;
  margin: 0 4px 0 9px;
  border: 1px solid #ababab;
}

.search input {
  flex: 1;
  min-width: 0;
  padding-left: 4px;
}

.search input::placeholder {
  color: #9b9b9b;
  opacity: 1;
}

.search button {
  width: 39px;
  border-left: 1px solid #ababab;
  background: #f0f0f0;
  color: #777;
}

.grid-frame {
  flex: 1;
  min-width: 0;
  min-height: 0;
  display: flex;
  flex-direction: column;
  border: 1px solid #d2d2d2;
  padding: 1px;
}

.grid {
  flex: 1;
  min-height: 0;
  display: flex;
  flex-direction: column;
  border: 1px solid #ababab;
}

.grid.totals {
  flex: none;
}

table {
  width: 100%;
  table-layout: fixed;
  border-collapse: separate;
  border-spacing: 0;
}

th,
td {
  padding: 0 3px;
  text-align: left;
  font-weight: normal;
  white-space: nowrap;
  overflow: hidden;
}

th {
  height: 19px;
  border-bottom: 1px solid #ababab;
}

th + th {
  border-left: 1px solid #ababab;
}

td {
  height: 21px;
  border-bottom: 1px solid #d2d2d2;
  background: #efefef;
}

tr:nth-child(even) td {
  background: #fafafa;
}

tr.selected td {
  background: #e5f1fb;
}

.records .mark {
  width: 18px;
}

.records td.mark {
  background: #fff;
  border-bottom-color: #fff;
}

.records td + td {
  border-left: 1px solid #ababab;
}

.pointer {
  display: block;
  margin-left: 5px;
  width: 0;
  height: 0;
  border: 4px solid transparent;
  border-left-color: #555;
  border-right: none;
}

.head {
  display: flex;
  align-items: center;
  justify-content: space-between;
}

.sort {
  margin-right: 11px;
  border: 4px solid transparent;
  border-bottom: 5px solid #777;
  border-top: none;
}

.c-sub {
  width: 160px;
}

.c-item {
  width: 166px;
}

.c-owner {
  width: 134px;
}

.c-from {
  width: 150px;
}

.grid-foot {
  flex: none;
  height: 31px;
  margin-top: auto;
  border-top: 1px solid #ababab;
  padding: 3px 0;
  display: flex;
}

.sum {
  width: 164px;
  height: 24px;
  margin-left: 180px;
  border: 1px solid #ababab;
  padding: 0 5px;
  line-height: 23px;
  text-align: right;
}

.win-location .sum {
  width: 248px;
  margin-left: 449px;
}

/* dialog */
.dialog {
  position: absolute;
  inset: 265px 76px 43px 833px;
  display: flex;
  flex-direction: column;
  background: #fafafa;
  border: 1px solid #0072c6;
}

.dialog-title {
  flex: none;
  height: 29px;
  display: flex;
  align-items: center;
  padding: 0 7px 0 9px;
}

.dialog-title h2 {
  margin: 0 auto 0 4px;
  font-size: 14px;
  font-weight: normal;
}

.dialog-title button {
  width: 27px;
  height: 17px;
  display: flex;
  align-items: center;
  justify-content: center;
}

.dialog-title button svg {
  width: 12px;
  height: 12px;
  fill: none;
  stroke: #222;
  stroke-width: 2;
}

.dialog-title .thin {
  stroke-width: 1;
}

.dialog-title .dialog-close {
  width: 37px;
  background: #c75050;
}

.dialog-title .dialog-close svg {
  stroke: #fff;
}

.dialog-panel {
  flex: 1;
  min-height: 0;
  margin: 0 6px 6px;
  display: flex;
  flex-direction: column;
  background: #fff;
  border: 1px solid #d2d2d2;
}

.dialog-panel fieldset {
  flex: 1;
  margin: 16px 12px 12px;
  padding-right: 10px;
}

.source-row {
  display: flex;
  align-items: center;
  height: 22px;
}

.source-row label {
  flex: none;
  width: 162px;
  padding-top: 1px;
  white-space: nowrap;
}

.picker {
  flex: 1;
  min-width: 0;
  height: 22px;
  display: flex;
  border: 1px solid #ababab;
}

.picker input {
  flex: 1;
  min-width: 0;
  margin: 1px;
  padding-top: 1px;
  border: 1px dotted #000;
  background: #ffffe1;
  color: #000;
  outline: 1px solid #ffffe1;
}

.picker button {
  width: 16px;
  border-left: 1px solid #ababab;
  background: #f0f0f0;
  display: flex;
  align-items: center;
  justify-content: center;
}

.picker button svg:not(.ic16) {
  width: 10px;
  height: 8px;
  fill: none;
  stroke: #777;
  stroke-width: 2;
}

.picker .open {
  width: 20px;
}

.dialog-actions {
  flex: none;
  height: 48px;
  display: flex;
  justify-content: flex-end;
  gap: 6px;
  padding: 12px 12px 0;
  border-top: 1px solid #d2d2d2;
  position: relative;
}

.dialog-actions button {
  width: 75px;
  height: 22px;
  padding-top: 1px;
  border: 1px solid #ababab;
  background: linear-gradient(#f2f2f2, #e6e6e6);
}

.dialog-actions .primary {
  border-color: #3399ff;
}

.dialog-actions .grip {
  position: absolute;
  right: 0;
  bottom: 0;
}

.pointer-arrow {
  position: absolute;
  left: 650px;
  top: 97px;
  width: 120px;
  height: 80px;
  pointer-events: none;
}
</style>
